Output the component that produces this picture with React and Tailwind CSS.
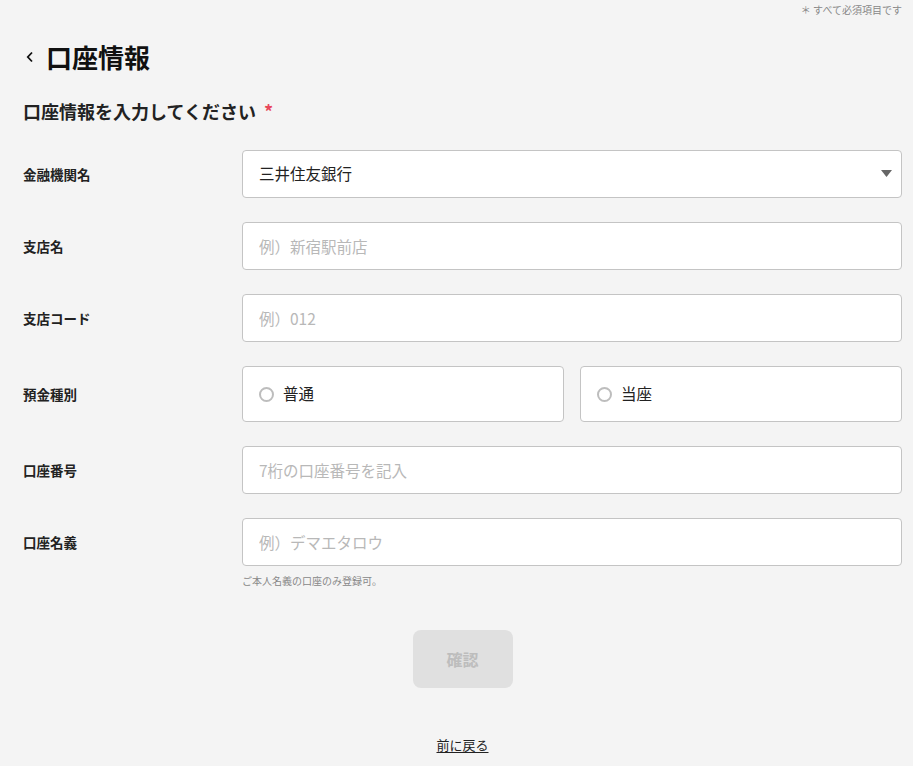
const font = { fontFamily: '"Noto Sans CJK JP", "Noto Sans", sans-serif' };

const Field = ({ label, children, height = "h-[48px]" }) => (
  <div className="flex items-start">
    <div className={`w-[219px] shrink-0 flex items-center ${height} text-[13.5px] font-bold text-[#222]`}>{label}</div>
    <div className="flex-1">{children}</div>
  </div>
);

const TextInput = ({ placeholder }) => (
  <input
    type="text"
    placeholder={placeholder}
    className="w-full h-[48px] border border-[#c4c4c4] rounded-[4px] bg-white px-4 text-[15.5px] text-[#222] placeholder:text-[#b8b8b8] outline-none"
  />
);

const Radio = ({ label }) => (
  <label className="flex-1 h-[56px] border border-[#c4c4c4] rounded-[4px] bg-white flex items-center gap-[9px] px-4 text-[15.5px] text-[#222]">
    <span className="w-[15px] h-[15px] rounded-full border-2 border-[#bdbdbd] bg-white" />
    {label}
  </label>
);

export default function App() {
  return (
    <div className="min-h-[766px] bg-[#f4f4f4] pl-[23px] pr-[11px] pb-4" style={font}>
      <div className="flex justify-end pt-[3px] text-[10px] text-[#888] leading-[14px]">＊ すべて必須項目です</div>

      <div className="flex items-center mt-[24px] h-[32px]">
        <svg width="10" height="14" viewBox="0 0 10 14" className="ml-[2px] mr-[11px]">
          <path d="M7 2.5 L2.8 7 L7 11.5" fill="none" stroke="#111" strokeWidth="1.8" />
        </svg>
        <h1 className="text-[26px] font-bold text-[#111] leading-none">口座情報</h1>
      </div>

      <h2 className="mt-[26px] text-[18px] font-bold text-[#222] leading-[24px]">
        口座情報を入力してください <span className="text-[#e8475b] ml-[4px]">*</span>
      </h2>

      <div className="mt-[27px] flex flex-col gap-[24px]">
        <Field label="金融機関名">
          <div className="relative">
            <select className="w-full h-[48px] appearance-none border border-[#c4c4c4] rounded-[4px] bg-white px-4 text-[15.5px] text-[#222] outline-none">
              <option>三井住友銀行</option>
            </select>
            <svg width="11" height="7" viewBox="0 0 11 7" className="absolute right-[10px] top-[20px]">
              <path d="M0 0 H11 L5.5 7 Z" fill="#666" />
            </svg>
          </div>
        </Field>
        <Field label="支店名">
          <TextInput placeholder="例）新宿駅前店" />
        </Field>
        <Field label="支店コード">
          <TextInput placeholder="例）012" />
        </Field>
        <Field label="預金種別" height="h-[56px]">
          <div className="flex gap-[16px]">
            <Radio label="普通" />
            <Radio label="当座" />
          </div>
        </Field>
        <Field label="口座番号">
          <TextInput placeholder="7桁の口座番号を記入" />
        </Field>
        <Field label="口座名義">
          <TextInput placeholder="例）デマエタロウ" />
          <p className="mt-[8px] text-[10px] text-[#888] leading-[14px]">ご本人名義の口座のみ登録可。</p>
        </Field>
      </div>

      <div className="flex justify-center mt-[42px]">
        <button className="w-[100px] h-[58px] rounded-[8px] bg-[#e0e0e0] text-[16px] font-bold text-[#bdbdbd]" disabled>
          確認
        </button>
      </div>

      <div className="flex justify-center mt-[47px]">
        <a className="text-[13px] text-[#222] underline underline-offset-2">前に戻る</a>
      </div>
    </div>
  );
}
